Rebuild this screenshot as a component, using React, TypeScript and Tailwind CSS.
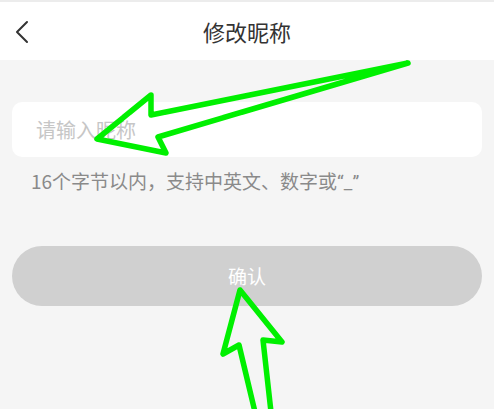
import React, { useState } from 'react';

const cjk = { fontFamily: '"Noto Sans CJK SC", "Noto Sans", sans-serif' };

const Arrows: React.FC = () => (
  <svg className="pointer-events-none absolute inset-0" width={494} height={409} viewBox="0 0 494 409">
    <g fill="none" stroke="#00f000" strokeWidth={5.5} strokeLinejoin="round" strokeLinecap="round">
      {/* arrow pointing at the input */}
      <polygon points="408,63 151,115 151,95 97,139 166,153 158,137" />
      {/* arrow pointing at the button */}
      <polyline points="255,412 239,345 223,354 240,290 282,342 263,340 271,412" />
    </g>
  </svg>
);

export default function App() {
  const [name, setName] = useState('');

  return (
    <div className="relative h-[409px] w-[494px] overflow-hidden bg-[#f5f5f5]" style={cjk}>
      <div className="h-[2px] bg-[#ececec]" />
      <header className="relative flex h-[58px] items-center justify-center bg-white">
        <button className="absolute left-[14px] top-[18px] flex h-6 w-4 items-center justify-center">
          <svg width="14" height="24" viewBox="0 0 14 24">
            <path d="M12 2 L2 12 L12 22" fill="none" stroke="#333" strokeWidth={2} strokeLinecap="round" strokeLinejoin="round" />
          </svg>
        </button>
        <h1 className="text-[22px] leading-none text-[#333]">修改昵称</h1>
      </header>

      <div className="px-3 pt-[42px]">
        <div className="flex h-[55px] items-center rounded-[10px] bg-white pl-6 pr-4">
          <input
            value={name}
            onChange={(e) => setName(e.target.value)}
            placeholder="请输入昵称"
            className="w-full bg-transparent text-[20px] text-[#333] outline-none placeholder:text-[#c6c6c6]"
          />
        </div>
        <p className="mt-[12px] pl-[19px] text-[19px] leading-6 text-[#8a8a8a]">
          16个字节以内，支持中英文、数字或<span className="font-['Roboto',sans-serif]">“_”</span>
        </p>

        <button className="mt-[51px] flex h-[60px] w-full items-center justify-center rounded-full bg-[#d0d0d0] text-[19px] text-white">
          确认
        </button>
      </div>

      <Arrows />
    </div>
  );
}
